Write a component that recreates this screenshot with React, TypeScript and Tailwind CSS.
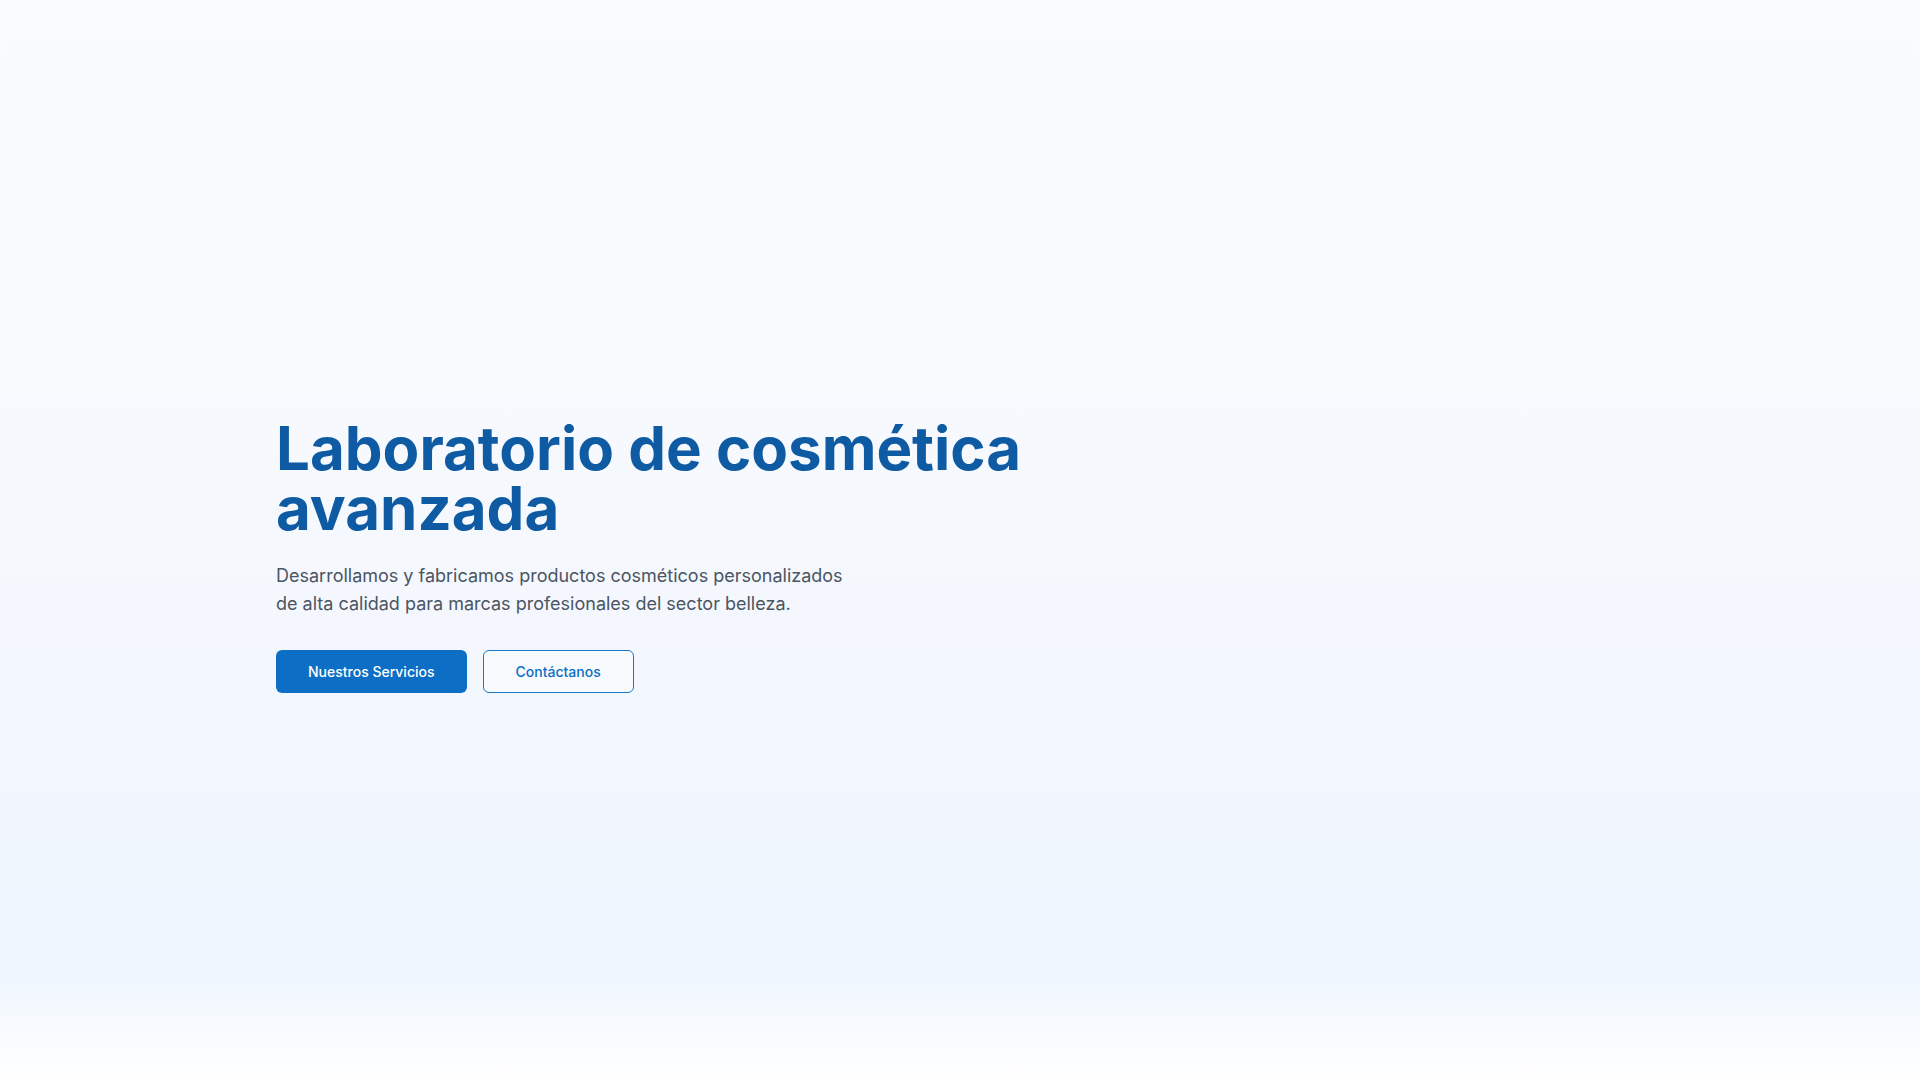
export default function App() {
  return (
    <div
      className="relative min-h-screen w-full overflow-hidden bg-[linear-gradient(180deg,#f9fafc_0%,#f7f9fd_35%,#f2f7fe_70%,#eff6ff_90%,#ffffff_100%)]"
      style={{ fontFamily: 'Inter, "Noto Sans", sans-serif' }}
    >
      {/* faint top bar */}
      <header className="absolute inset-x-0 top-0 h-[60px] bg-white/20">
        <div className="mx-[8px] mt-[43px] h-[17px] bg-[#f6f9fd]/70" />
      </header>

      <section className="flex min-h-screen items-center pt-[31px]">
        <div className="mx-auto w-[1368px]">
          <h1 className="max-w-4xl text-[60px] font-bold leading-[60px] text-[#0e5ba3]">
            Laboratorio de cosmética avanzada
          </h1>
          <p className="mt-6 max-w-xl text-lg leading-7 text-[#4b5563]">
            Desarrollamos y fabricamos productos cosméticos personalizados de alta calidad para marcas profesionales del sector belleza.
          </p>
          <div className="mt-8 flex gap-4">
            <button className="flex h-[43px] items-center rounded-md bg-[#0c6ec4] px-8 text-sm font-[450] text-white">
              Nuestros Servicios
            </button>
            <button className="flex h-[43px] items-center rounded-md border border-[#1a78c8] bg-white/40 px-8 text-sm font-[450] text-[#0c6ec4]">
              Contáctanos
            </button>
          </div>
        </div>
      </section>
    </div>
  )
}
